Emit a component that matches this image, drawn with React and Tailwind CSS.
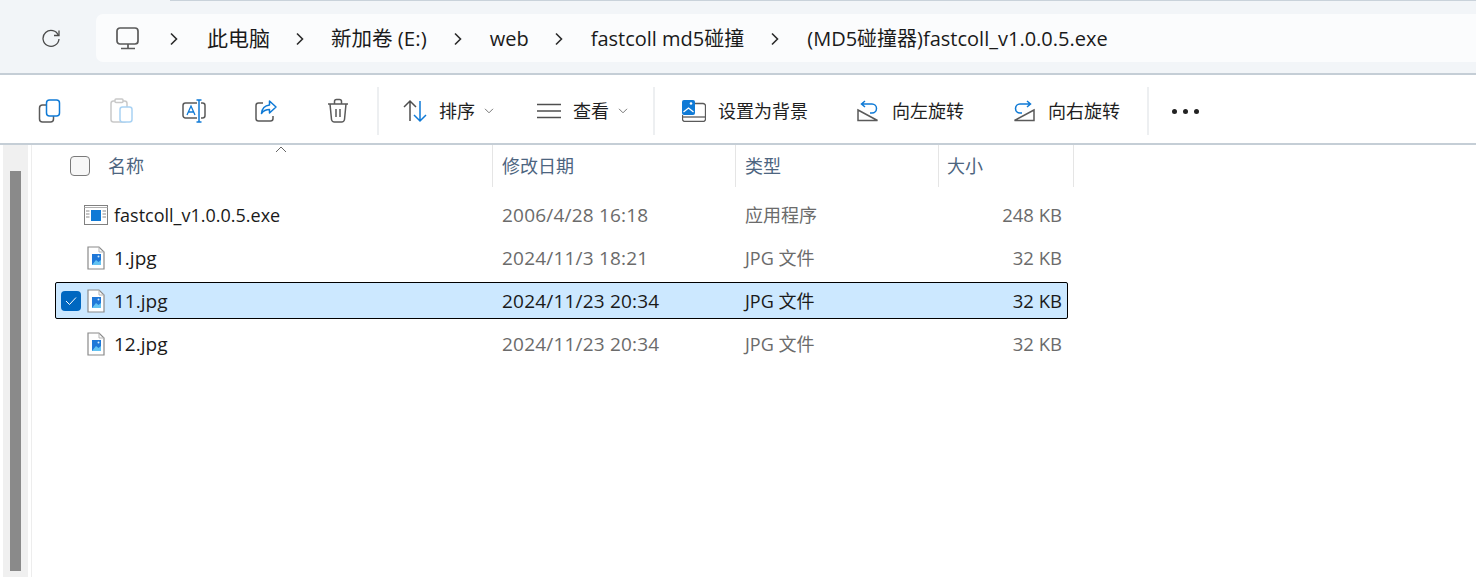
const font = { fontFamily: '"Open Sans","Noto Sans CJK SC",sans-serif' }

const Chevron = () => (
  <svg width="8" height="14" viewBox="0 0 8 14" fill="none" stroke="#2b2b2b" strokeWidth="1.6"><path d="M1 1.5 6.5 7 1 12.5" /></svg>
)

const Small = () => (
  <svg width="10" height="6" viewBox="0 0 10 6" fill="none" stroke="#777" strokeWidth="1"><path d="M1 .8 5 4.8 9 .8" /></svg>
)

const Sep = ({ cls }) => <div className={"w-[2px] h-[48px] bg-[#edeff1] " + cls}></div>

const FileIcon = () => (
  <svg width="18" height="24" viewBox="0 0 18 24" className="shrink-0">
    <path d="M1 1h11l5 5v17H1z" fill="#fff" stroke="#8a8a8a" strokeWidth="1.2" />
    <path d="M12 1v5h5" fill="none" stroke="#b5b5b5" />
    <rect x="5" y="8" width="9" height="11" fill="#1f78d8" />
    <path d="M5 19l4-5 2.500 2 2.500-2v5z" fill="#63c3f2" />
    <circle cx="11.500" cy="10.500" r="1" fill="#d6ecfb" />
  </svg>
)

const ExeIcon = () => (
  <svg width="24" height="20" viewBox="0 0 24 20" className="shrink-0">
    <rect x=".5" y=".5" width="23" height="19" fill="#fff" stroke="#808080" />
    <path d="M.5 2.500h23" stroke="#b0b0b0" />
    <rect x="7" y="5" width="10" height="11" fill="#0f7ad6" />
    <path d="M2 6h3.500M2 9h3.500M2 12h3.500M18.500 6H22M18.500 9H22M18.500 12H22" stroke="#8a8a8a" />
  </svg>
)

const rows = [
  { name: "fastcoll_v1.0.0.5.exe", date: "2006/4/28 16:18", type: "应用程序", size: "248 KB", exe: true },
  { name: "1.jpg", date: "2024/11/3 18:21", type: "JPG 文件", size: "32 KB" },
  { name: "11.jpg", date: "2024/11/23 20:34", type: "JPG 文件", size: "32 KB", selected: true },
  { name: "12.jpg", date: "2024/11/23 20:34", type: "JPG 文件", size: "32 KB" },
]

const Row = ({ row }) => (
  <div className={"flex items-center h-[37px] w-[1013px] text-[18px] " + (row.selected ? "bg-[#cce8ff] outline outline-1 outline-offset-[-1px] outline-black rounded-[2px]" : "")}>
    <div className="w-[26px] flex justify-end">
      {row.selected && (
        <div className="w-[20px] h-[20px] rounded-[4px] bg-[#0067c0] flex items-center justify-center">
          <svg width="12" height="10" viewBox="0 0 12 10" fill="none" stroke="#fff" strokeWidth="1"><path d="M1 5l3.500 3.500L11 1.500" /></svg>
        </div>
      )}
    </div>
    <div className="w-[30px] flex justify-center">{row.exe ? <ExeIcon /> : <FileIcon />}</div>
    <div className={"w-[391px] pl-[3px] pt-[2px] text-[#1a1a1a] " + (row.exe ? "" : "text-[19px]")}>{row.name}</div>
    <div className={"w-[243px] pt-[2px] text-[19px] tracking-[0.2px] " + (row.selected ? "text-[#1a1a1a]" : "text-[#6b6b6b]")}>{row.date}</div>
    <div className={"w-[190px] pt-[2px] " + (row.selected ? "text-[#1a1a1a]" : "text-[#6b6b6b]")}>{row.type}</div>
    <div className={"w-[127px] text-right text-[18.500px] " + (row.selected ? "text-[#1a1a1a]" : "text-[#6b6b6b]")}>{row.size}</div>
  </div>
)

export default function App() {
  return (
    <div style={font} className="w-[1476px] h-[577px] overflow-hidden bg-white flex flex-col">
      <div className="h-[75px] shrink-0 bg-[#f2f5f8] border-b-2 border-[#c5ced6] pt-[14px] pl-[41px] flex relative">
        <div className="absolute top-0 left-[170px] right-0 h-px bg-[#c9d2da]"></div>
        <div className="w-[55px] h-[48px] flex items-center">
          <svg width="20" height="20" viewBox="0 0 20 20" fill="none" stroke="#4a4a4a" strokeWidth="1.300"><path d="M17.500 7.500A8 8 0 1 0 18 11" /><path d="M18 2.500v5h-5" /></svg>
        </div>
        <div className="flex-1 h-[48px] bg-[#fbfcfd] rounded-l-[7px] flex items-center text-[20px] text-[#1a1a1a] pl-[20px] pt-[1px]">
          <svg width="24" height="24" viewBox="0 0 24 24" fill="none" stroke="#5a5a5a" strokeWidth="1.700"><rect x="1" y="1" width="21" height="16" rx="3" /><path d="M12 17v4M5 21.500h14" /></svg>
          <div className="ml-[30px]"><Chevron /></div>
          <span className="ml-[29px] text-[21px]">此电脑</span>
          <div className="ml-[26px]"><Chevron /></div>
          <span className="ml-[27px] text-[20.500px]">新加卷 (E:)</span>
          <div className="ml-[27px]"><Chevron /></div>
          <span className="ml-[28px]">web</span>
          <div className="ml-[26px]"><Chevron /></div>
          <span className="ml-[28px]">fastcoll md5碰撞</span>
          <div className="ml-[27px]"><Chevron /></div>
          <span className="ml-[28px]">(MD5碰撞器)fastcoll_v1.0.0.5.exe</span>
        </div>
      </div>

      <div className="h-[70px] shrink-0 bg-white border-b-2 border-[#c5ced6] flex items-center text-[18px] text-[#1f1f1f] pl-[38px] pt-[4px]">
        <svg width="24" height="24" viewBox="0 0 24 24" fill="none" strokeWidth="1.500">
          <rect x="1.500" y="6" width="14" height="17" rx="3" stroke="#5a5a5a" />
          <rect x="8.500" y="1" width="13" height="16" rx="3" fill="#fff" stroke="#0f7ad6" />
        </svg>
        <svg className="ml-[48px]" width="24" height="26" viewBox="0 0 24 26" fill="none" strokeWidth="1.500">
          <rect x="1" y="3" width="16" height="21" rx="2.500" stroke="#c9c9c9" />
          <rect x="5" y="1" width="8" height="3.500" rx="1" stroke="#c9c9c9" fill="#fff" />
          <rect x="10" y="9" width="12" height="15" rx="2.500" fill="#fff" stroke="#a9d2f3" />
        </svg>
        <svg className="ml-[48px]" width="24" height="24" viewBox="0 0 24 24" fill="none" strokeWidth="1.500">
          <path d="M15 4H3.500a2.500 2.500 0 0 0-2.500 2.500v10A2.500 2.500 0 0 0 3.500 19H15M19 4h1.500A2.500 2.500 0 0 1 23 6.500v10a2.500 2.500 0 0 1-2.500 2.500H19" stroke="#5a5a5a" />
          <path d="M14.500 1h5M14.500 23h5M17 1v22" stroke="#0f7ad6" />
          <path d="M5 16 9 7l4 9M6.500 13h5" stroke="#0f7ad6" strokeWidth="1.300" />
        </svg>
        <svg className="ml-[48px]" width="24" height="24" viewBox="0 0 24 24" fill="none" strokeWidth="1.500">
          <path d="M9 4H4.500A2.500 2.500 0 0 0 2 6.500v13A2.500 2.500 0 0 0 4.500 22h12a2.500 2.500 0 0 0 2.500-2.500V17" stroke="#5a5a5a" />
          <path d="M15.500 2 22 8l-6.500 6v-3.500c-3.500 0-6 1-8 4 .5-5 3.500-8 8-8.500z" stroke="#0f7ad6" strokeLinejoin="round" />
        </svg>
        <svg className="ml-[48px]" width="24" height="26" viewBox="0 0 24 26" fill="none" stroke="#5a5a5a" strokeWidth="1.500">
          <path d="M2 6h20M8.500 6V3.500A2 2 0 0 1 10.500 1.500h3a2 2 0 0 1 2 2V6M4 6l1.500 15.500A3 3 0 0 0 8.500 24h7a3 3 0 0 0 3-2.500L20 6M10 11v8M14 11v8" />
        </svg>
        <Sep cls="ml-[27px]" />
        <svg className="ml-[24px]" width="24" height="24" viewBox="0 0 24 24" fill="none" strokeWidth="1.500">
          <path d="M7 22V2M1 8l6-6 6 6" stroke="#4f4f4f" />
          <path d="M17 2v20M11 16l6 6 6-6" stroke="#0f7ad6" />
        </svg>
        <span className="ml-[12px]">排序</span>
        <div className="ml-[9px]"><Small /></div>
        <svg className="ml-[43px]" width="24" height="16" viewBox="0 0 24 16" fill="none" stroke="#4f4f4f" strokeWidth="1.500"><path d="M0 1.500h24M0 8h24M0 14.500h24" /></svg>
        <span className="ml-[12px]">查看</span>
        <div className="ml-[9px]"><Small /></div>
        <Sep cls="ml-[25px]" />
        <svg className="ml-[27px]" width="24" height="22" viewBox="0 0 24 22" fill="none">
          <path d="M13 3.500h8A2.500 2.500 0 0 1 23.500 6v13a2.500 2.500 0 0 1-2.500 2.500H3A2.500 2.500 0 0 1 .5 19v-4" stroke="#5a5a5a" strokeWidth="1.300" />
          <path d="M.5 17h23" stroke="#5a5a5a" strokeWidth="1.300" />
          <rect x="0" y="0" width="13" height="15" rx="2" fill="#0f7ad6" />
          <path d="M1.500 12 6.500 8l5 4" stroke="#fff" strokeWidth="1.300" />
          <circle cx="9" cy="3.500" r="1.300" fill="#fff" />
        </svg>
        <span className="ml-[12px]">设置为背景</span>
        <svg className="ml-[49px]" width="22" height="22" viewBox="0 0 22 22" fill="none" strokeWidth="1.500">
          <path d="M1 10 20.500 20.500H1z" stroke="#5a5a5a" />
          <path d="M8 1 4.500 4 8 7M4.500 4H15a4.500 4.500 0 0 1 0 9h-2" stroke="#0f7ad6" />
        </svg>
        <span className="ml-[13px]">向左旋转</span>
        <svg className="ml-[49px]" width="22" height="22" viewBox="0 0 22 22" fill="none" strokeWidth="1.500">
          <path d="M21 10 1.500 20.500H21z" stroke="#5a5a5a" />
          <path d="M14 1l3.500 3L14 7M17.500 4H7a4.500 4.500 0 0 0 0 9h2" stroke="#0f7ad6" />
        </svg>
        <span className="ml-[13px]">向右旋转</span>
        <Sep cls="ml-[27px]" />
        <div className="ml-[23px] flex gap-[6px]">
          <div className="w-[5px] h-[5px] rounded-full bg-[#222]"></div>
          <div className="w-[5px] h-[5px] rounded-full bg-[#222]"></div>
          <div className="w-[5px] h-[5px] rounded-full bg-[#222]"></div>
        </div>
      </div>

      <div className="flex-1 flex">
        <div className="w-[32px] shrink-0 flex">
          <div className="w-[3px]"></div>
          <div className="w-[25px] bg-[#f0f0f0] pl-[7px] pt-[26px]">
            <div className="w-[11px] h-[400px] bg-[#8a8a8a]"></div>
          </div>
          <div className="w-[4px] border-r border-[#ededed]"></div>
        </div>
        <div className="flex-1 flex flex-col">
          <div className="flex h-[42px] text-[18px] text-[#4d6580] items-center relative">
            <svg className="absolute left-[243px] top-[1px]" width="12" height="7" viewBox="0 0 12 7" fill="none" stroke="#666" strokeWidth="1"><path d="M1 6l5-5 5 5" /></svg>
            <div className="w-[38px]"></div>
            <div className="w-[20px] h-[20px] rounded-[4px] border border-[#7a7a7a] bg-[#f7f7f7]"></div>
            <div className="w-[402px] pl-[18px] h-full flex items-center">名称</div>
            <div className="w-[243px] h-full border-l border-[#e5e5e5] pl-[9px] flex items-center">修改日期</div>
            <div className="w-[203px] h-full border-l border-[#e5e5e5] pl-[9px] flex items-center">类型</div>
            <div className="w-[136px] h-full border-x border-[#e5e5e5] pl-[8px] flex items-center">大小</div>
          </div>
          <div className="ml-[23px] pt-[9px] flex flex-col gap-[6px]">
            {rows.map((row) => <Row key={row.name} row={row} />)}
          </div>
        </div>
      </div>
    </div>
  )
}
